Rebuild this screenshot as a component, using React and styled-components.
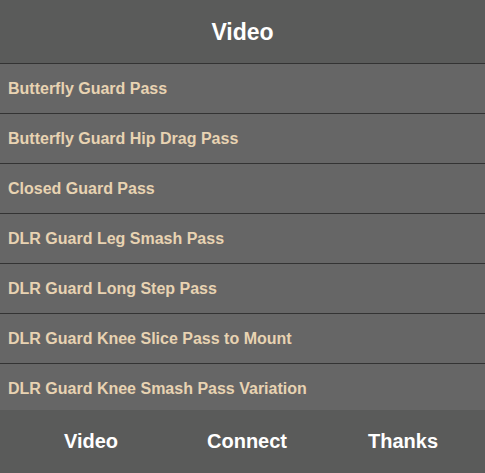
import React from "react";
import styled, { createGlobalStyle } from "styled-components";

const Global = createGlobalStyle`
  html, body { margin: 0; padding: 0; height: 100%; }
  body { font-family: "Liberation Sans", Arial, sans-serif; background: #666666; }
  #root { height: 100%; }
`;

const Page = styled.div`
  display: flex;
  flex-direction: column;
  height: 100vh;
  overflow: hidden;
`;

const Header = styled.header`
  flex: 0 0 63px;
  display: flex;
  align-items: center;
  justify-content: center;
  background: #5a5b5a;
  border-bottom: 1px solid #333333;
`;

const Title = styled.h1`
  margin: 0;
  padding-top: 1px;
  font-size: 23px;
  font-weight: bold;
  color: #ffffff;
`;

const List = styled.ul`
  flex: 1;
  margin: 0;
  padding: 0;
  list-style: none;
  overflow: hidden;
  background: #666666;
`;

const Row = styled.li`
  height: 49px;
  display: flex;
  align-items: center;
  padding: 0 8px;
  border-bottom: 1px solid #333333;
  font-size: 16px;
  font-weight: bold;
  color: #e8d3b2;
`;

const Footer = styled.nav`
  flex: 0 0 63px;
  display: grid;
  grid-template-columns: repeat(3, 156px);
  align-items: center;
  padding-left: 13px;
  background: #5a5b5a;
`;

const Tab = styled.a`
  text-align: center;
  font-size: 20px;
  font-weight: bold;
  color: #ffffff;
  text-decoration: none;
`;

const items = [
  "Butterfly Guard Pass",
  "Butterfly Guard Hip Drag Pass",
  "Closed Guard Pass",
  "DLR Guard Leg Smash Pass",
  "DLR Guard Long Step Pass",
  "DLR Guard Knee Slice Pass to Mount",
  "DLR Guard Knee Smash Pass Variation",
];

export default function App() {
  return (
    <>
      <Global />
      <Page>
        <Header>
          <Title>Video</Title>
        </Header>
        <List>
          {items.map((t) => (
            <Row key={t}>{t}</Row>
          ))}
        </List>
        <Footer>
          <Tab>Video</Tab>
          <Tab>Connect</Tab>
          <Tab>Thanks</Tab>
        </Footer>
      </Page>
    </>
  );
}
